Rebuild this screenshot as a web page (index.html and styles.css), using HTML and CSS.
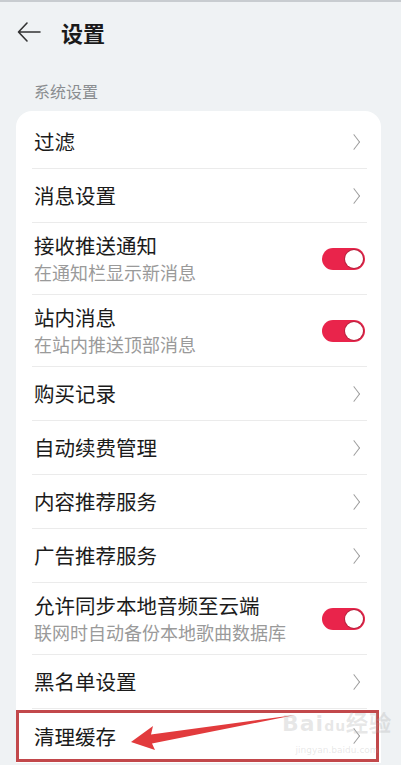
FILE: index.html
```html
<!DOCTYPE html>
<html lang="zh-CN">
<head>
<meta charset="utf-8">
<title>设置</title>
<link rel="stylesheet" href="styles.css">
</head>
<body>
<div class="page">
  <header class="header">
    <svg class="back" width="24" height="22" viewBox="0 0 24 22"><path d="M23 11H2M10 2L1.5 11L10 20" fill="none" stroke="#333" stroke-width="1.6" stroke-linecap="round" stroke-linejoin="round"/></svg>
    <h1 class="title">设置</h1>
  </header>
  <div class="section-label">系统设置</div>
  <div class="card">
    <div class="row"><span class="row-title">过滤</span><span class="chev"></span></div>
    <div class="row"><span class="row-title">消息设置</span><span class="chev"></span></div>
    <div class="row tall"><div class="texts"><span class="row-title">接收推送通知</span><span class="row-sub">在通知栏显示新消息</span></div><span class="toggle"></span></div>
    <div class="row tall"><div class="texts"><span class="row-title">站内消息</span><span class="row-sub">在站内推送顶部消息</span></div><span class="toggle"></span></div>
    <div class="row"><span class="row-title">购买记录</span><span class="chev"></span></div>
    <div class="row"><span class="row-title">自动续费管理</span><span class="chev"></span></div>
    <div class="row"><span class="row-title">内容推荐服务</span><span class="chev"></span></div>
    <div class="row"><span class="row-title">广告推荐服务</span><span class="chev"></span></div>
    <div class="row tall"><div class="texts"><span class="row-title">允许同步本地音频至云端</span><span class="row-sub">联网时自动备份本地歌曲数据库</span></div><span class="toggle"></span></div>
    <div class="row"><span class="row-title">黑名单设置</span><span class="chev"></span></div>
    <div class="row last"><span class="row-title">清理缓存</span><span class="chev"></span></div>
  </div>
  <div class="mark-box"></div>
  <svg class="mark-arrow" width="401" height="765" viewBox="0 0 401 765"><polygon points="131,742 153,726 151,734.5 295,715 152,743.5 155,750" fill="#e23b3d"/></svg>
  <div class="watermark"><span class="wm-big">Bai<span class="wm-du">du</span>经验</span><span class="wm-small">jingyan.baidu.com</span></div>
</div>
</body>
</html>
```
FILE: styles.css
```css
* { box-sizing: border-box; margin: 0; padding: 0; }
html, body { width: 401px; height: 765px; overflow: hidden; }
body {
  background: #eff2f4;
  font-family: "Noto Sans CJK SC", "Noto Sans", sans-serif;
  color: #1b1b1b;
}
.page {
  position: relative;
  width: 401px;
  height: 765px;
  border-top: 2px solid #c8ccd0;
}
.header {
  height: 60px;
  display: flex;
  align-items: center;
  padding-left: 17px;
}
.back { display: block; }
.title {
  font-size: 22px;
  font-weight: 700;
  margin-left: 20px;
  line-height: 28px;
  color: #1a1a1a;
}
.section-label {
  margin-top: 18px;
  padding-left: 34px;
  font-size: 16px;
  line-height: 22px;
  color: #8a8d90;
}
.card {
  margin: 9px 20px 0 16px;
  background: #fff;
  border-radius: 16px 16px 0 0;
  padding: 4px 14px 0 16px;
}
.row {
  height: 54px;
  display: flex;
  align-items: center;
  justify-content: space-between;
  padding: 0 4px 0 2px;
  border-bottom: 1px solid #ebebeb;
}
.row.tall { height: 72px; }
.row.last { border-bottom: none; }
.texts { display: flex; flex-direction: column; }
.row-title {
  font-size: 20.5px;
  line-height: 25px;
  color: #1b1b1b;
}
.row-sub {
  font-size: 18px;
  line-height: 24px;
  color: #9a9a9a;
  margin-top: 2px;
}
.chev {
  width: 16px;
  height: 16px;
  position: relative;
}
.chev::after {
  content: "";
  position: absolute;
  right: 4px;
  top: 3px;
  width: 9px;
  height: 9px;
  border-top: 1.6px solid #9b9b9b;
  border-right: 1.6px solid #9b9b9b;
  transform: rotate(45deg) skew(8deg, 8deg);
}
.toggle {
  width: 43px;
  height: 22px;
  border-radius: 11px;
  background: #e9244b;
  position: relative;
  margin-right: -2px;
}
.toggle::after {
  content: "";
  position: absolute;
  right: 2px;
  top: 2px;
  width: 18px;
  height: 18px;
  border-radius: 50%;
  background: #fff;
  box-shadow: 0 0 0 1px #b8233e;
}
.mark-box {
  position: absolute;
  left: 16px;
  top: 708px;
  width: 363px;
  height: 52px;
  border: 3px solid #c2484b;
}
.mark-arrow {
  position: absolute;
  left: 0;
  top: -2px;
}
.watermark {
  position: absolute;
  left: 282px;
  top: 708px;
  display: flex;
  flex-direction: column;
  align-items: center;
  color: rgba(170, 170, 170, 0.28);
  font-family: "DejaVu Sans", sans-serif;
}
.wm-big { font-size: 22px; line-height: 28px; font-weight: 700; letter-spacing: 1px; }
.wm-du { font-size: 14px; }
.wm-small { font-size: 9px; line-height: 12px; margin-top: 4px; }
```
